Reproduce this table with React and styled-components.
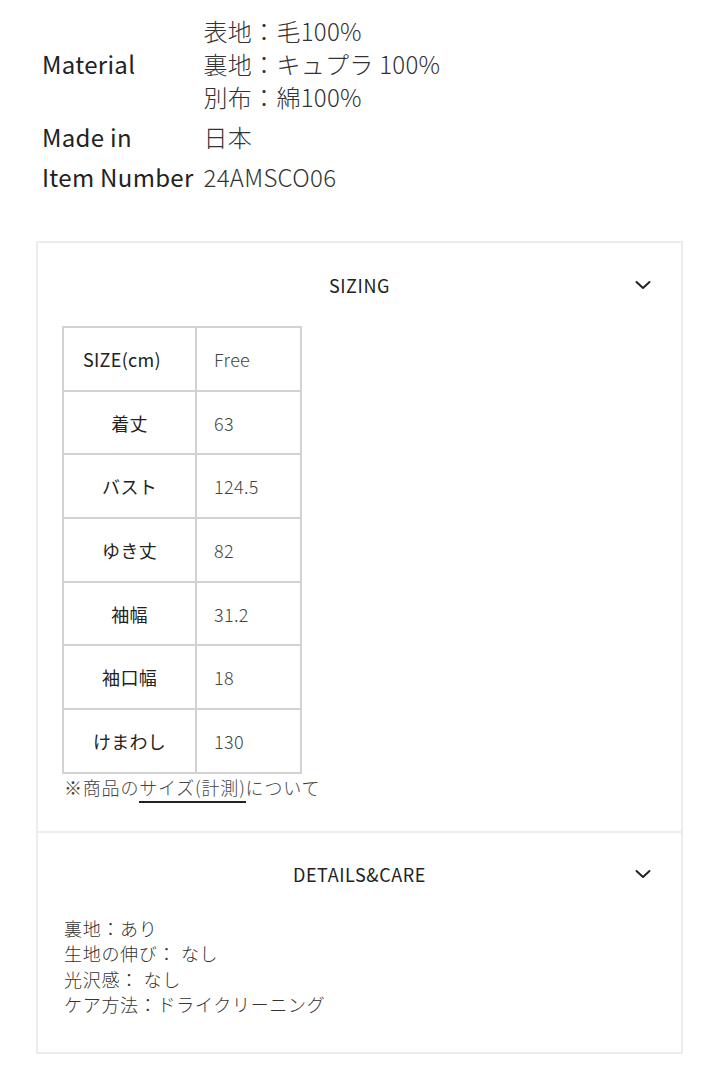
import React from "react";
import styled, { createGlobalStyle } from "styled-components";

const Global = createGlobalStyle`
  html, body { margin: 0; padding: 0; background: #fff; }
  body {
    font-family: "Noto Sans CJK JP", "Noto Sans", sans-serif;
    color: #222;
    -webkit-font-smoothing: antialiased;
  }
`;

const Page = styled.div`
  width: 721px;
  padding-top: 10px;
  padding-bottom: 28px;
`;

const SpecGrid = styled.dl`
  display: grid;
  grid-template-columns: auto 1fr;
  column-gap: 10px;
  margin: 0 0 0 42px;
  font-size: 24px;
  letter-spacing: 0.3px;
  line-height: 33px;
  color: #222;
`;

const SpecLabel = styled.dt`
  margin: 0;
  padding: 3.5px 0;
  display: flex;
  align-items: center;
`;

const SpecValue = styled.dd`
  margin: 0;
  padding: 3.5px 0;
  color: #333;
  font-weight: 300;
`;

const Accordion = styled.div`
  margin: 45px 0 0 36px;
  width: 647px;
  border: 2px solid #ececec;
  box-sizing: border-box;
`;

const Section = styled.section`
  & + & {
    border-top: 2px solid #ececec;
  }
`;

const Header = styled.div`
  display: grid;
  grid-template-columns: 1fr auto 1fr;
  align-items: center;
  height: 83px;
  padding: 0 30px;
  box-sizing: border-box;
`;

const Title = styled.h3`
  grid-column: 2;
  margin: 0;
  font-size: 18px;
  font-weight: 400;
  letter-spacing: 0.6px;
  color: #222;
  line-height: 22px;
`;

const Chevron = styled.svg`
  grid-column: 3;
  justify-self: end;
  width: 16px;
  height: 10px;
`;

const Body = styled.div`
  padding: ${(p) => p.$pad};
`;

const SizeTable = styled.table`
  border-collapse: collapse;
  width: 240px;
  font-size: 18px;
  letter-spacing: 0.3px;
  color: #333;
`;

const Cell = styled.td`
  border: 2px solid #d2d2d2;
  height: 63.7px;
  padding: 0;
  box-sizing: border-box;
  text-align: ${(p) => (p.$head && !p.$first ? "center" : "left")};
  padding-left: ${(p) => (p.$head ? (p.$first ? "19px" : "0") : "17px")};
  width: ${(p) => (p.$head ? "134px" : "106px")};
  color: ${(p) => (p.$head ? "#222" : "#444")};
  font-weight: ${(p) => (p.$head ? 400 : 300)};
  vertical-align: middle;
`;

const Note = styled.p`
  margin: 0;
  padding-left: 2px;
  font-size: 18px;
  letter-spacing: 0.8px;
  line-height: 26px;
  color: #444;
  font-weight: 300;
`;

const NoteLink = styled.a`
  color: #444;
  text-decoration: none;
  border-bottom: 2px solid #222;
  padding-bottom: 1px;
`;

const CareList = styled.div`
  font-size: 18px;
  letter-spacing: 0.7px;
  line-height: 25.5px;
  color: #333;
  font-weight: 300;
  padding-left: 2px;
`;

const ChevronIcon = () => (
  <Chevron viewBox="0 0 16 10" fill="none">
    <path d="M1.5 2 L8 8 L14.5 2" stroke="#222" strokeWidth="2" strokeLinecap="round" strokeLinejoin="round" />
  </Chevron>
);

const sizes = [
  ["SIZE(cm)", "Free"],
  ["着丈", "63"],
  ["バスト", "124.5"],
  ["ゆき丈", "82"],
  ["袖幅", "31.2"],
  ["袖口幅", "18"],
  ["けまわし", "130"],
];

export default function App() {
  return (
    <Page>
      <Global />
      <SpecGrid>
        <SpecLabel>Material</SpecLabel>
        <SpecValue>
          表地：毛100%
          <br />
          裏地：キュプラ 100%
          <br />
          別布：綿100%
        </SpecValue>
        <SpecLabel>Made in</SpecLabel>
        <SpecValue>日本</SpecValue>
        <SpecLabel>Item Number</SpecLabel>
        <SpecValue>24AMSCO06</SpecValue>
      </SpecGrid>

      <Accordion>
        <Section>
          <Header>
            <Title>SIZING</Title>
            <ChevronIcon />
          </Header>
          <Body $pad="0 24px 31px 24px">
            <SizeTable>
              <tbody>
                {sizes.map(([k, v], i) => (
                  <tr key={k}>
                    <Cell $head $first={i === 0}>{k}</Cell>
                    <Cell>{v}</Cell>
                  </tr>
                ))}
              </tbody>
            </SizeTable>
            <Note>
              ※商品の<NoteLink href="#">サイズ(計測)</NoteLink>について
            </Note>
          </Body>
        </Section>
        <Section>
          <Header>
            <Title>DETAILS&amp;CARE</Title>
            <ChevronIcon />
          </Header>
          <Body $pad="0 24px 34px 24px">
            <CareList>
              裏地：あり
              <br />
              生地の伸び： なし
              <br />
              光沢感： なし
              <br />
              ケア方法：ドライクリーニング
            </CareList>
          </Body>
        </Section>
      </Accordion>
    </Page>
  );
}
